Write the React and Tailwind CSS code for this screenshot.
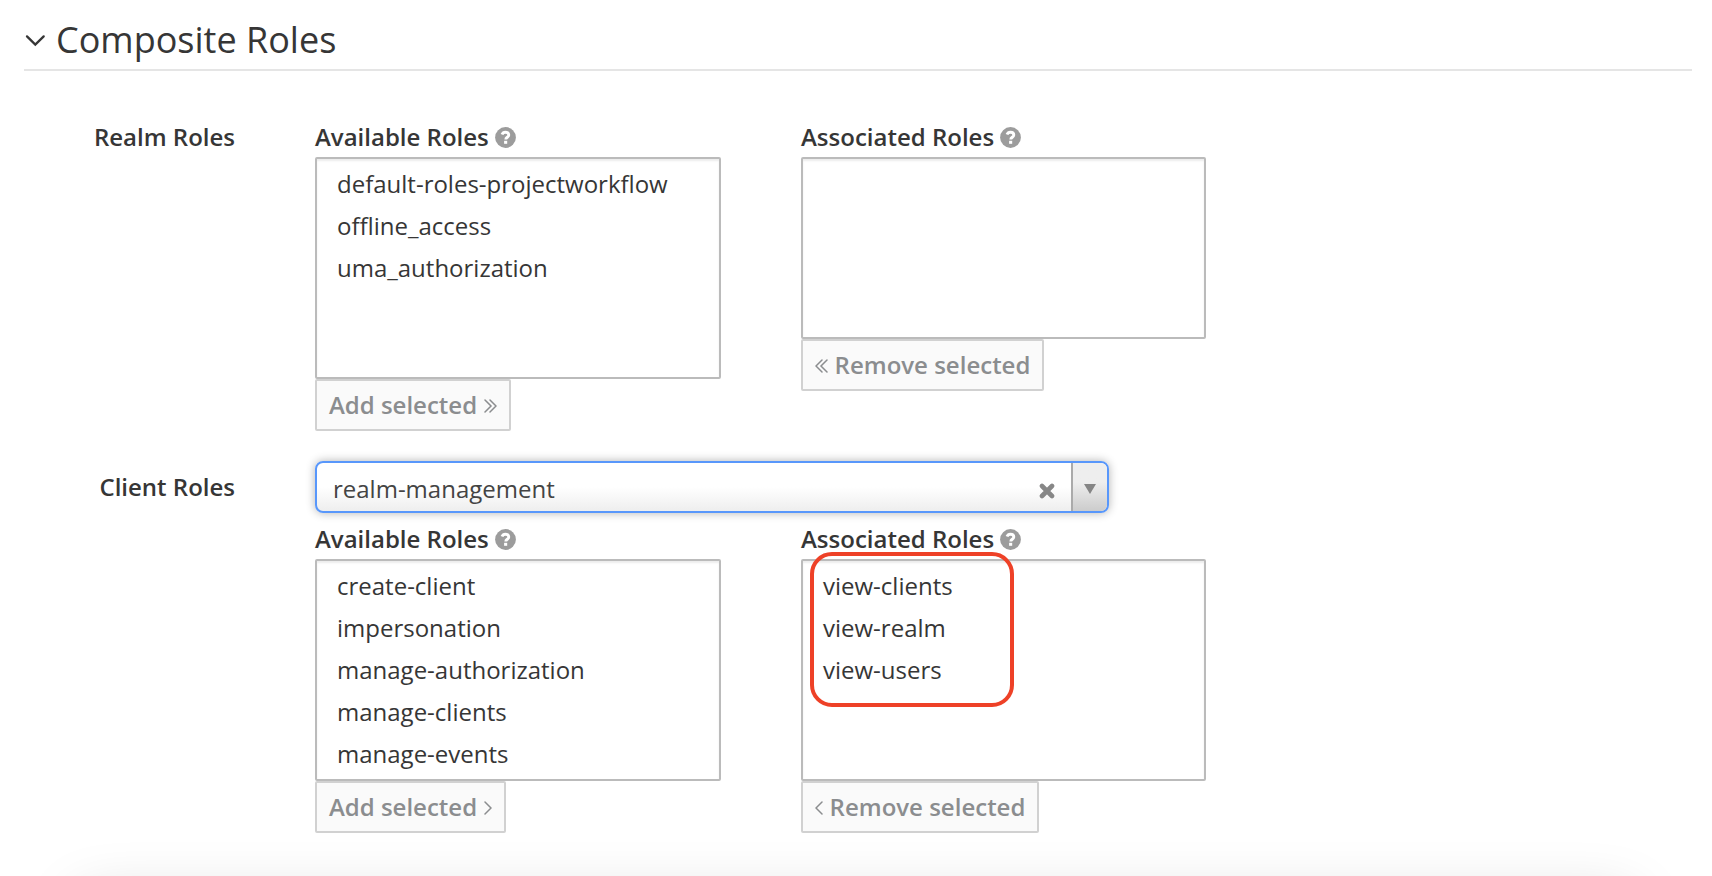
import React from "react";

function HelpIcon() {
  return (
    <svg className="ml-[6px] mt-[6px] h-[21px] w-[21px] shrink-0" viewBox="0 0 21 21" fill="none">
      <circle cx="10.5" cy="10.5" r="10.4" fill="#9c9c9c" />
      <path
        d="M7 7.6C7.6 6 8.8 5.2 10.4 5.2c2 0 3.4 1.1 3.4 2.8 0 2.1-3 2.4-3 4.4"
        stroke="#fff"
        strokeWidth="2.9"
      />
      <rect x="9.1" y="13.8" width="3.1" height="3" fill="#fff" />
    </svg>
  );
}

function Chevrons({ left = false, double = false }) {
  const w = double ? 13 : 8;
  return (
    <svg
      className={left ? "mr-[7px] mt-[2px] shrink-0" : "ml-[7px] mt-[2px] shrink-0"}
      width={w}
      height="14"
      viewBox={`0 0 ${w} 14`}
      fill="none"
      stroke="#8b8d8f"
      strokeWidth="1.5"
      strokeLinecap="round"
    >
      <g transform={left ? `translate(${w} 0) scale(-1 1)` : undefined}>
        <path d="M1 1l6 6-6 6" />
        {double && <path d="M6 1l6 6-6 6" />}
      </g>
    </svg>
  );
}

function FieldLabel({ children }) {
  return (
    <div className="mb-1 flex h-8 text-[24px] leading-8 font-semibold whitespace-nowrap">
      {children}
      <HelpIcon />
    </div>
  );
}

function ListBox({ items = [], size }) {
  return (
    <ul
      className={`${size} rounded-[2px] border-2 border-[#bbbbbb] bg-white pt-1 pl-[20px] text-[24px] leading-[42px] shadow-[inset_0_2px_2px_rgba(3,3,3,0.075)]`}
    >
      {items.map((item) => (
        <li key={item} className="h-[42px] whitespace-nowrap">
          {item}
        </li>
      ))}
    </ul>
  );
}

function ActionButton({ size, children }) {
  return (
    <button
      className={`${size} flex h-[52px] items-center justify-center rounded-[2px] border-2 border-[#d1d1d1] bg-[#fafafa] text-[24px] leading-[48px] font-semibold whitespace-nowrap text-[#8b8d8f]`}
    >
      {children}
    </button>
  );
}

function RowLabel({ children }) {
  return (
    <div className="mr-[80px] w-[211px] shrink-0 text-right text-[24px] leading-8 font-semibold">
      {children}
    </div>
  );
}

export default function App() {
  return (
    <main className="relative h-[876px] w-full overflow-hidden bg-white pr-5 pl-6 font-['Open_Sans',sans-serif] text-[#363636]">
      <header className="flex h-[71px] items-start border-b-2 border-[#e5e5e5]">
        <svg
          className="mt-[34px] h-[13px] w-[22px] shrink-0"
          viewBox="0 0 22 13"
          fill="none"
          stroke="#363636"
          strokeWidth="2.3"
          strokeLinecap="round"
        >
          <path d="M3 2.4l8.3 8.2 8.4-8.2" />
        </svg>
        <h2 className="mt-[15px] ml-[10px] text-[36px] leading-[49px] whitespace-nowrap">
          Composite Roles
        </h2>
      </header>

      <section className="flex pt-[50px]">
        <RowLabel>Realm Roles</RowLabel>
        <div className="mr-[80px] w-[406px]">
          <FieldLabel>Available Roles</FieldLabel>
          <ListBox
            size="h-[222px] w-[406px]"
            items={["default-roles-projectworkflow", "offline_access", "uma_authorization"]}
          />
          <ActionButton size="w-[196px]">
            Add selected
            <Chevrons double />
          </ActionButton>
        </div>
        <div>
          <FieldLabel>Associated Roles</FieldLabel>
          <ListBox size="h-[182px] w-[405px]" />
          <ActionButton size="w-[243px]">
            <Chevrons left double />
            Remove selected
          </ActionButton>
        </div>
      </section>

      <section className="flex pt-[30px]">
        <div className="pt-[10px]">
          <RowLabel>Client Roles</RowLabel>
        </div>
        <div>
          <div className="flex h-[52px] w-[794px] overflow-hidden rounded-[8px] border-2 border-[#5897fb] bg-linear-to-b from-white from-50% to-[#eeeeee] shadow-[0_0_10px_rgba(0,0,0,0.3)]">
            <span className="grow pt-[2px] pl-[16px] text-[24px] leading-[48px] text-[#444444]">
              realm-management
            </span>
            <svg
              className="mt-[20px] mr-[16px] h-[16px] w-[16px] shrink-0"
              viewBox="0 0 16 16"
              stroke="#878787"
              strokeWidth="4.6"
              strokeLinecap="round"
            >
              <path d="M3 3l10 10M13 3L3 13" />
            </svg>
            <div className="flex w-[36px] shrink-0 justify-center border-l-2 border-[#aaaaaa] bg-linear-to-b from-[#eeeeee] from-40% to-[#cccccc]">
              <svg className="mt-[21px] h-[10px] w-[12px]" viewBox="0 0 12 10" fill="#858585">
                <path d="M0 0h12L6 10z" />
              </svg>
            </div>
          </div>
          <div className="mt-[10px] flex">
            <div className="mr-[80px] w-[406px]">
              <FieldLabel>Available Roles</FieldLabel>
              <ListBox
                size="h-[222px] w-[406px]"
                items={[
                  "create-client",
                  "impersonation",
                  "manage-authorization",
                  "manage-clients",
                  "manage-events",
                ]}
              />
              <ActionButton size="w-[191px]">
                Add selected
                <Chevrons />
              </ActionButton>
            </div>
            <div className="relative">
              <FieldLabel>Associated Roles</FieldLabel>
              <ListBox
                size="h-[222px] w-[405px]"
                items={["view-clients", "view-realm", "view-users"]}
              />
              <ActionButton size="w-[238px]">
                <Chevrons left />
                Remove selected
              </ActionButton>
              <div className="pointer-events-none absolute top-[29px] left-[9px] h-[155px] w-[204px] rounded-[22px] border-4 border-[#ee4127]" />
            </div>
          </div>
        </div>
      </section>

      <div className="pointer-events-none absolute right-[80px] bottom-[-124px] left-[80px] h-[100px] shadow-[0_0_60px_rgba(0,0,0,0.18)]" />
    </main>
  );
}
